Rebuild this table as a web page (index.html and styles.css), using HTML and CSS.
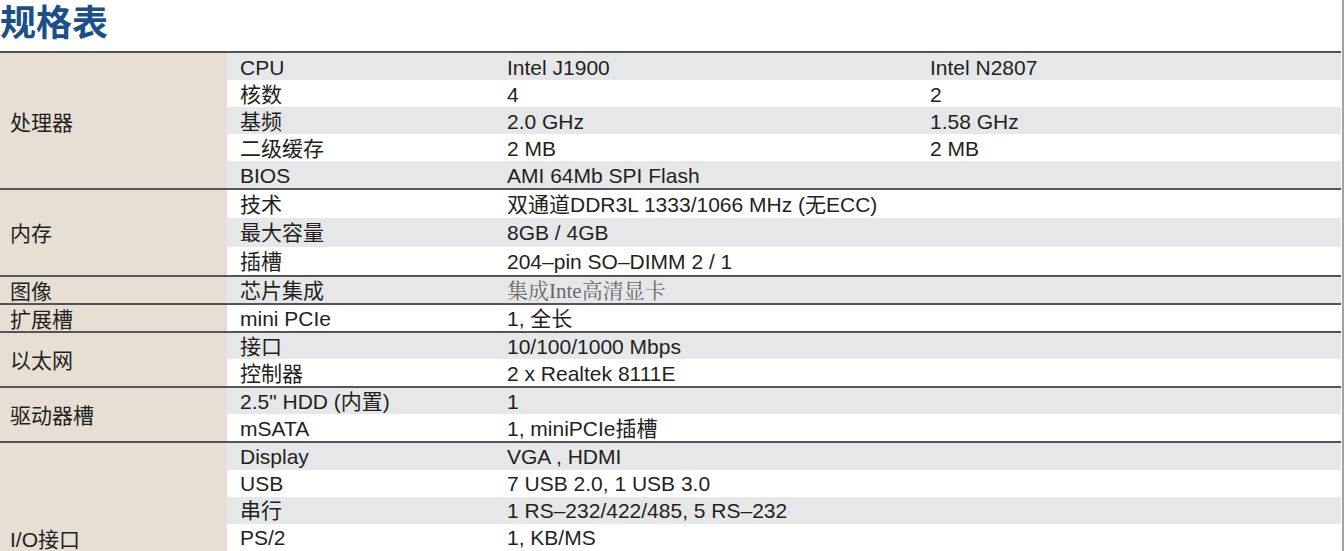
FILE: index.html
```html
<!DOCTYPE html>
<html lang="zh-CN">
<head>
<meta charset="utf-8">
<title>规格表</title>
<link rel="stylesheet" href="styles.css">
</head>
<body>
<div class="page">
  <h1 class="title">规格表</h1>
  <div class="spec">
    <div class="group g-cpu">
      <div class="label">处理器</div>
      <div class="rows">
        <div class="row alt"><span>CPU</span><span>Intel J1900</span><span>Intel N2807</span></div>
        <div class="row"><span>核数</span><span>4</span><span>2</span></div>
        <div class="row alt"><span>基频</span><span>2.0 GHz</span><span>1.58 GHz</span></div>
        <div class="row"><span>二级缓存</span><span>2 MB</span><span>2 MB</span></div>
        <div class="row alt"><span>BIOS</span><span>AMI 64Mb SPI Flash</span><span></span></div>
      </div>
    </div>
    <div class="group g-mem">
      <div class="label">内存</div>
      <div class="rows">
        <div class="row"><span>技术</span><span>双通道DDR3L 1333/1066 MHz (无ECC)</span><span></span></div>
        <div class="row alt"><span>最大容量</span><span>8GB / 4GB</span><span></span></div>
        <div class="row"><span>插槽</span><span>204–pin SO–DIMM 2 / 1</span><span></span></div>
      </div>
    </div>
    <div class="group g-one">
      <div class="label">图像</div>
      <div class="rows">
        <div class="row alt"><span>芯片集成</span><span class="serif">集成Inte高清显卡</span><span></span></div>
      </div>
    </div>
    <div class="group g-one">
      <div class="label">扩展槽</div>
      <div class="rows">
        <div class="row"><span>mini PCIe</span><span>1, 全长</span><span></span></div>
      </div>
    </div>
    <div class="group g-two">
      <div class="label">以太网</div>
      <div class="rows">
        <div class="row alt"><span>接口</span><span>10/100/1000 Mbps</span><span></span></div>
        <div class="row"><span>控制器</span><span>2 x Realtek 8111E</span><span></span></div>
      </div>
    </div>
    <div class="group g-two">
      <div class="label">驱动器槽</div>
      <div class="rows">
        <div class="row alt"><span>2.5" HDD (内置)</span><span>1</span><span></span></div>
        <div class="row"><span>mSATA</span><span>1, miniPCIe插槽</span><span></span></div>
      </div>
    </div>
    <div class="group g-io">
      <div class="label">I/O接口</div>
      <div class="rows">
        <div class="row alt"><span>Display</span><span>VGA , HDMI</span><span></span></div>
        <div class="row"><span>USB</span><span>7 USB 2.0, 1 USB 3.0</span><span></span></div>
        <div class="row alt"><span>串行</span><span>1 RS–232/422/485, 5 RS–232</span><span></span></div>
        <div class="row"><span>PS/2</span><span>1, KB/MS</span><span></span></div>
      </div>
    </div>
  </div>
</div>
</body>
</html>
```

FILE: styles.css
```css
html, body {
  margin: 0;
  padding: 0;
  background: #ffffff;
  overflow: hidden;
}

.page {
  width: 1341px;
  padding-right: 1px;
  border-right: 2px solid #a3a3a3;
  min-height: 551px;
  font-family: "Liberation Sans", Arial, "Noto Sans CJK SC", sans-serif;
  font-size: 21px;
  line-height: 22px;
  color: #231f20;
}

.title {
  margin: 0;
  height: 51px;
  font-family: "Noto Sans CJK SC", sans-serif;
  font-size: 36px;
  line-height: 40px;
  font-weight: 700;
  color: #1c4f87;
}

.spec {
  display: flex;
  flex-direction: column;
}

.group {
  --rh: 27px;
  display: grid;
  grid-template-columns: 227px 1fr;
  border-top: 2px solid #555558;
}

.g-mem { --rh: 28.3px; }
.g-one { --rh: 26px; }
.g-two { --rh: 26.5px; }
.g-io  { --rh: 27px; min-height: 190px; }

.label {
  background: #e7ded4;
  display: flex;
  align-items: center;
  padding-left: 10px;
  padding-top: 4px;
}

.rows {
  display: flex;
  flex-direction: column;
}

.row {
  display: grid;
  grid-template-columns: 267px 423px 1fr;
  height: var(--rh);
  align-items: center;
  background: #ffffff;
}

.row.alt {
  background: #e6e7e8;
}

.row span {
  padding-left: 13px;
  padding-top: 2px;
  white-space: nowrap;
}

.serif {
  font-family: "Liberation Serif", "Noto Serif CJK SC", serif;
  color: #6a6a6c;
}
```
